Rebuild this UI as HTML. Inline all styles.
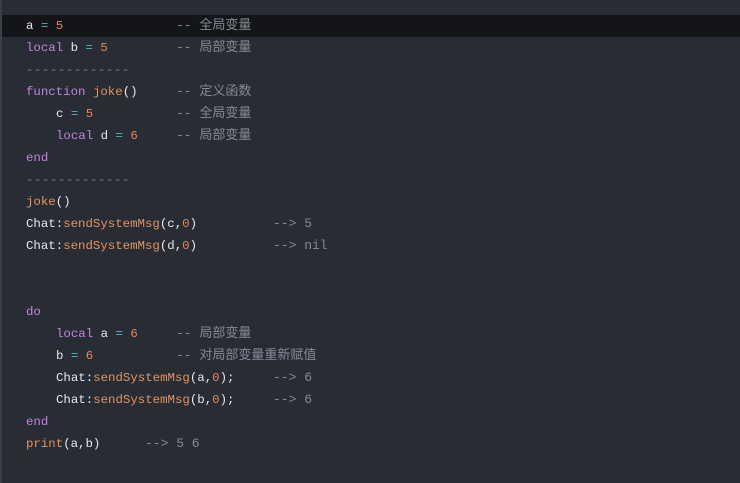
<!DOCTYPE html>
<html><head><meta charset="utf-8"><style>
body{margin:0;width:740px;height:483px;background:#282c34;overflow:hidden;position:relative;font-family:"Liberation Mono","Noto Sans CJK SC",monospace;font-size:12.4px;}
.edge{position:absolute;left:0;top:0;width:2px;height:483px;background:#3a3f48}
.hl{position:absolute;left:2px;top:15px;width:738px;height:22px;background:#131519}
.l{position:absolute;white-space:pre;line-height:22px;height:22px;color:#e6e8ec;margin-top:1px}
.k{color:#c285d8}.n{color:#e5865a}.o{color:#56b6c2}.f{color:#e5935f}.c{color:#858a94;font-size:13px}
.d{color:#7f848e;letter-spacing:0.56px}
</style></head><body>
<div class="edge"></div><div class="hl"></div>
<div class="l" style="left:26px;top:14px">a <span class="o">=</span> <span class="n">5</span></div>
<div class="l c" style="left:176px;top:14px">-- 全局变量</div>
<div class="l" style="left:26px;top:36px"><span class="k">local</span> b <span class="o">=</span> <span class="n">5</span></div>
<div class="l c" style="left:176px;top:36px">-- 局部变量</div>
<div class="l d" style="left:26px;top:58px">-------------</div>
<div class="l" style="left:26px;top:80px"><span class="k">function</span> <span class="f">joke</span>()</div>
<div class="l c" style="left:176px;top:80px">-- 定义函数</div>
<div class="l" style="left:56px;top:102px">c <span class="o">=</span> <span class="n">5</span></div>
<div class="l c" style="left:176px;top:102px">-- 全局变量</div>
<div class="l" style="left:56px;top:124px"><span class="k">local</span> d <span class="o">=</span> <span class="n">6</span></div>
<div class="l c" style="left:176px;top:124px">-- 局部变量</div>
<div class="l k" style="left:26px;top:146px">end</div>
<div class="l d" style="left:26px;top:168px">-------------</div>
<div class="l" style="left:26px;top:190px"><span class="f">joke</span>()</div>
<div class="l" style="left:26px;top:212px">Chat:<span class="f">sendSystemMsg</span>(c,<span class="n">0</span>)</div>
<div class="l c" style="left:273px;top:212px">--&gt; 5</div>
<div class="l" style="left:26px;top:234px">Chat:<span class="f">sendSystemMsg</span>(d,<span class="n">0</span>)</div>
<div class="l c" style="left:273px;top:234px">--&gt; nil</div>
<div class="l k" style="left:26px;top:300px">do</div>
<div class="l" style="left:56px;top:322px"><span class="k">local</span> a <span class="o">=</span> <span class="n">6</span></div>
<div class="l c" style="left:176px;top:322px">-- 局部变量</div>
<div class="l" style="left:56px;top:344px">b <span class="o">=</span> <span class="n">6</span></div>
<div class="l c" style="left:176px;top:344px">-- 对局部变量重新赋值</div>
<div class="l" style="left:56px;top:366px">Chat:<span class="f">sendSystemMsg</span>(a,<span class="n">0</span>);</div>
<div class="l c" style="left:273px;top:366px">--&gt; 6</div>
<div class="l" style="left:56px;top:388px">Chat:<span class="f">sendSystemMsg</span>(b,<span class="n">0</span>);</div>
<div class="l c" style="left:273px;top:388px">--&gt; 6</div>
<div class="l k" style="left:26px;top:410px">end</div>
<div class="l" style="left:26px;top:432px"><span class="f">print</span>(a,b)</div>
<div class="l c" style="left:145px;top:432px">--&gt; 5 6</div>
</body></html>
